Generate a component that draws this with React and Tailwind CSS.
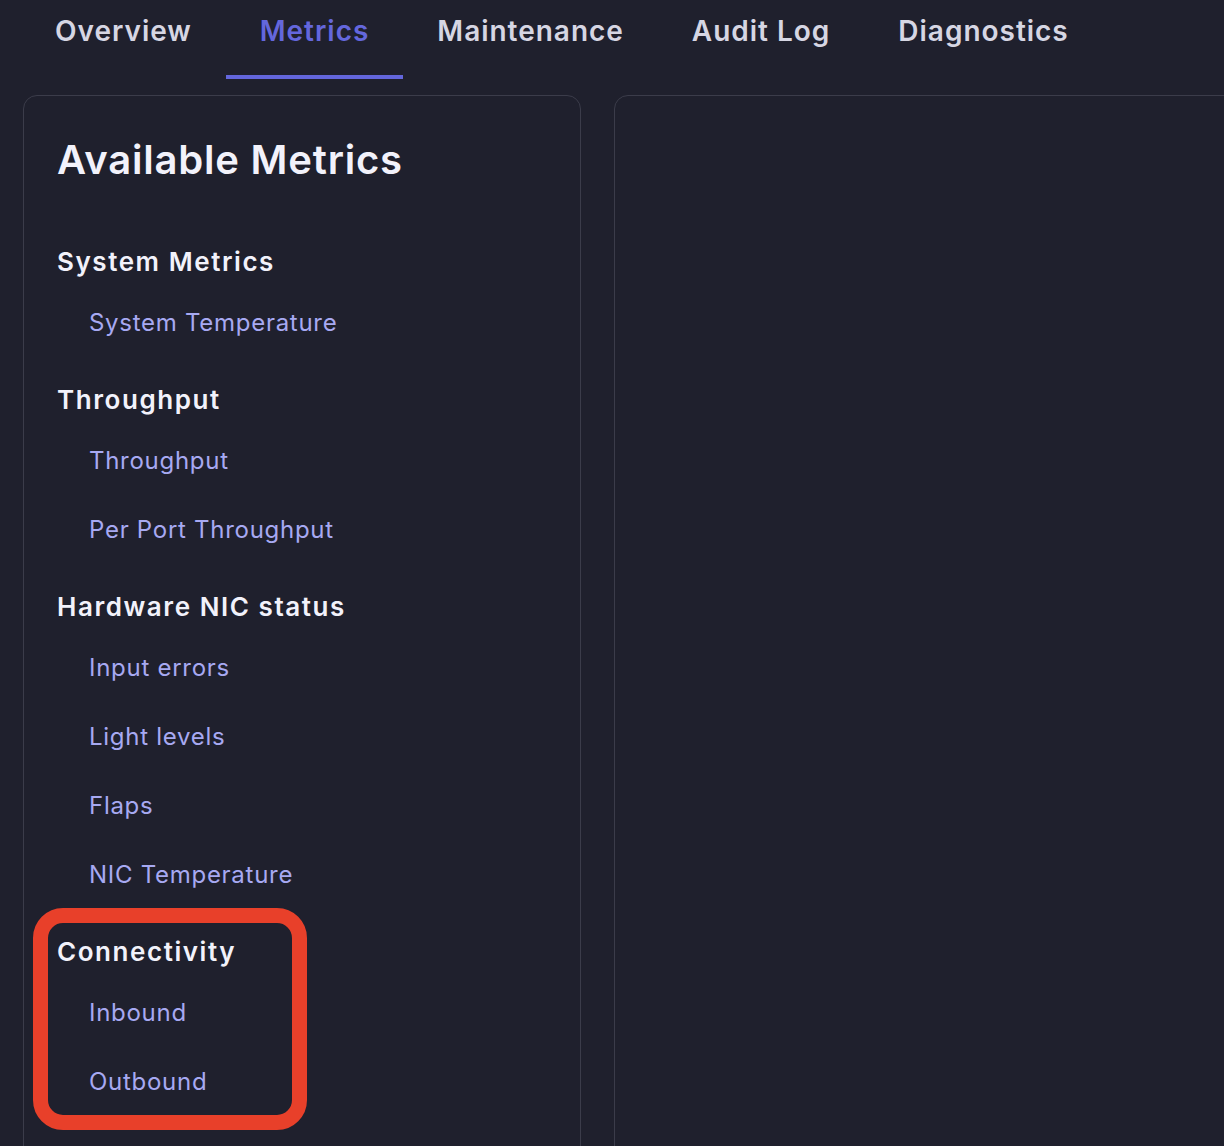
import { useState } from 'react';

const tabs = ['Overview', 'Metrics', 'Maintenance', 'Audit Log', 'Diagnostics'];

const groups = [
    { title: 'System Metrics', items: ['System Temperature'] },
    { title: 'Throughput', items: ['Throughput', 'Per Port Throughput'] },
    { title: 'Hardware NIC status', items: ['Input errors', 'Light levels', 'Flaps', 'NIC Temperature'] },
    { title: 'Connectivity', items: ['Inbound', 'Outbound'] },
];

const App = () => {
    const [active, setActive] = useState('Metrics');

    return (
        <div
            className="relative h-[1146px] w-[1224px] overflow-hidden bg-[#1f202d] px-[23px]"
            style={{ fontFamily: 'Inter, "Noto Sans", sans-serif' }}
        >
            {/* Tab bar */}
            <nav className="ml-[-2px] flex">
                {tabs.map((tab) => {
                    const isActive = tab === active;
                    return (
                        <button
                            key={tab}
                            onClick={() => setActive(tab)}
                            className={`px-[34px] pt-[13px] pb-[26px] border-b-4 text-[28px] leading-[36px] font-semibold tracking-[0.035em] ${
                                isActive ? 'border-[#6366dc] text-[#6467dc]' : 'border-transparent text-[#d6d6e3]'
                            }`}
                        >
                            {tab}
                        </button>
                    );
                })}
            </nav>

            <div className="mt-4 flex gap-[33px]">
                {/* Metrics list */}
                <aside className="w-[558px] shrink-0 rounded-[14px] border border-[#3b3c4a] px-[33px] pt-10 pb-24">
                    <h2 className="text-[40px] leading-[48px] font-semibold tracking-[0.02em] text-[#f2f2fb]">
                        Available Metrics
                    </h2>

                    <div className="mt-[62px] flex flex-col gap-[45px]">
                        {groups.map((group) => (
                            <section key={group.title}>
                                <h3 className="text-[26px] leading-8 font-semibold tracking-[0.06em] text-[#f2f2fb]">
                                    {group.title}
                                </h3>
                                <ul className="mt-[29px] flex flex-col gap-[37px] pl-8">
                                    {group.items.map((item) => (
                                        <li key={item} className="text-[24px] leading-8 tracking-[0.03em] text-[#a7a9f2]">
                                            {item}
                                        </li>
                                    ))}
                                </ul>
                            </section>
                        ))}
                    </div>
                </aside>

                {/* Chart area (empty) */}
                <div className="h-[1200px] w-[700px] shrink-0 rounded-[14px] border border-[#3b3c4a]" />
            </div>

            {/* Highlight annotation */}
            <div className="pointer-events-none absolute left-[33px] top-[908px] h-[222px] w-[274px] rounded-[30px] border-[15px] border-[#e8402a]" />
        </div>
    );
};

export default App;
